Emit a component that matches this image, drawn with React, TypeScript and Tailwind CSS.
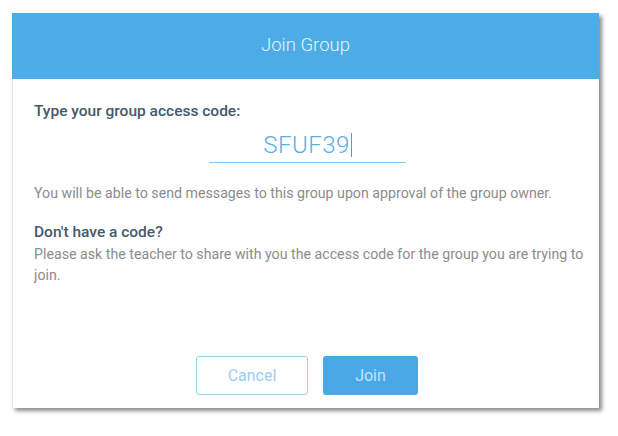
import React from "react";

export default function App() {
  return (
    <div className="w-[618px] h-[436px] bg-white pt-[13px] pl-[12px]" style={{ fontFamily: "Roboto, 'Liberation Sans', sans-serif" }}>
      <div className="w-[587px] h-[395px] bg-white flex flex-col border-l border-[#e4e4e4] shadow-[3px_3px_4px_rgba(0,0,0,0.45)]">
        <div className="h-[66px] bg-[#4dabe6] flex items-center justify-center -ml-px">
          <span className="text-[18.5px] font-light text-[#e8f4fc]">Join Group</span>
        </div>
        <div className="flex flex-col pl-[21px] pr-[12px] pt-[22px]">
          <div className="text-[15.5px] leading-[20px] font-medium text-[#45596b]">Type your group access code:</div>
          <div className="mt-[10px] w-[197px] ml-[175px] border-b border-[#8ac6ef] pb-[3px] flex justify-center">
            <span className="text-[24px] leading-[28px] font-light tracking-[0.5px] text-[#5aaee6]">SFUF39</span>
            <span className="w-px h-[24px] bg-[#4a9fd8] mt-[2px] ml-[1px]" />
          </div>
          <div className="mt-[20px] text-[14.2px] leading-[20px] text-[#8c8c8c]">
            You will be able to send messages to this group upon approval of the group owner.
          </div>
          <div className="mt-[19px] text-[15.5px] leading-[20px] font-medium text-[#45596b]">Don't have a code?</div>
          <div className="mt-[2px] text-[14.2px] leading-[21px] text-[#8c8c8c]">
            Please ask the teacher to share with you the access code for the group you are trying to join.
          </div>
          <div className="mt-[70px] flex gap-[15px] pl-[162px]">
            <button className="w-[112px] h-[39px] rounded-[3px] border border-[#9ed0f1] bg-white text-[16px] text-[#9fcdee]">
              Cancel
            </button>
            <button className="w-[95px] h-[39px] rounded-[3px] bg-[#4aa8e6] text-[16px] text-[#c3e2f7]">
              Join
            </button>
          </div>
        </div>
      </div>
    </div>
  );
}
